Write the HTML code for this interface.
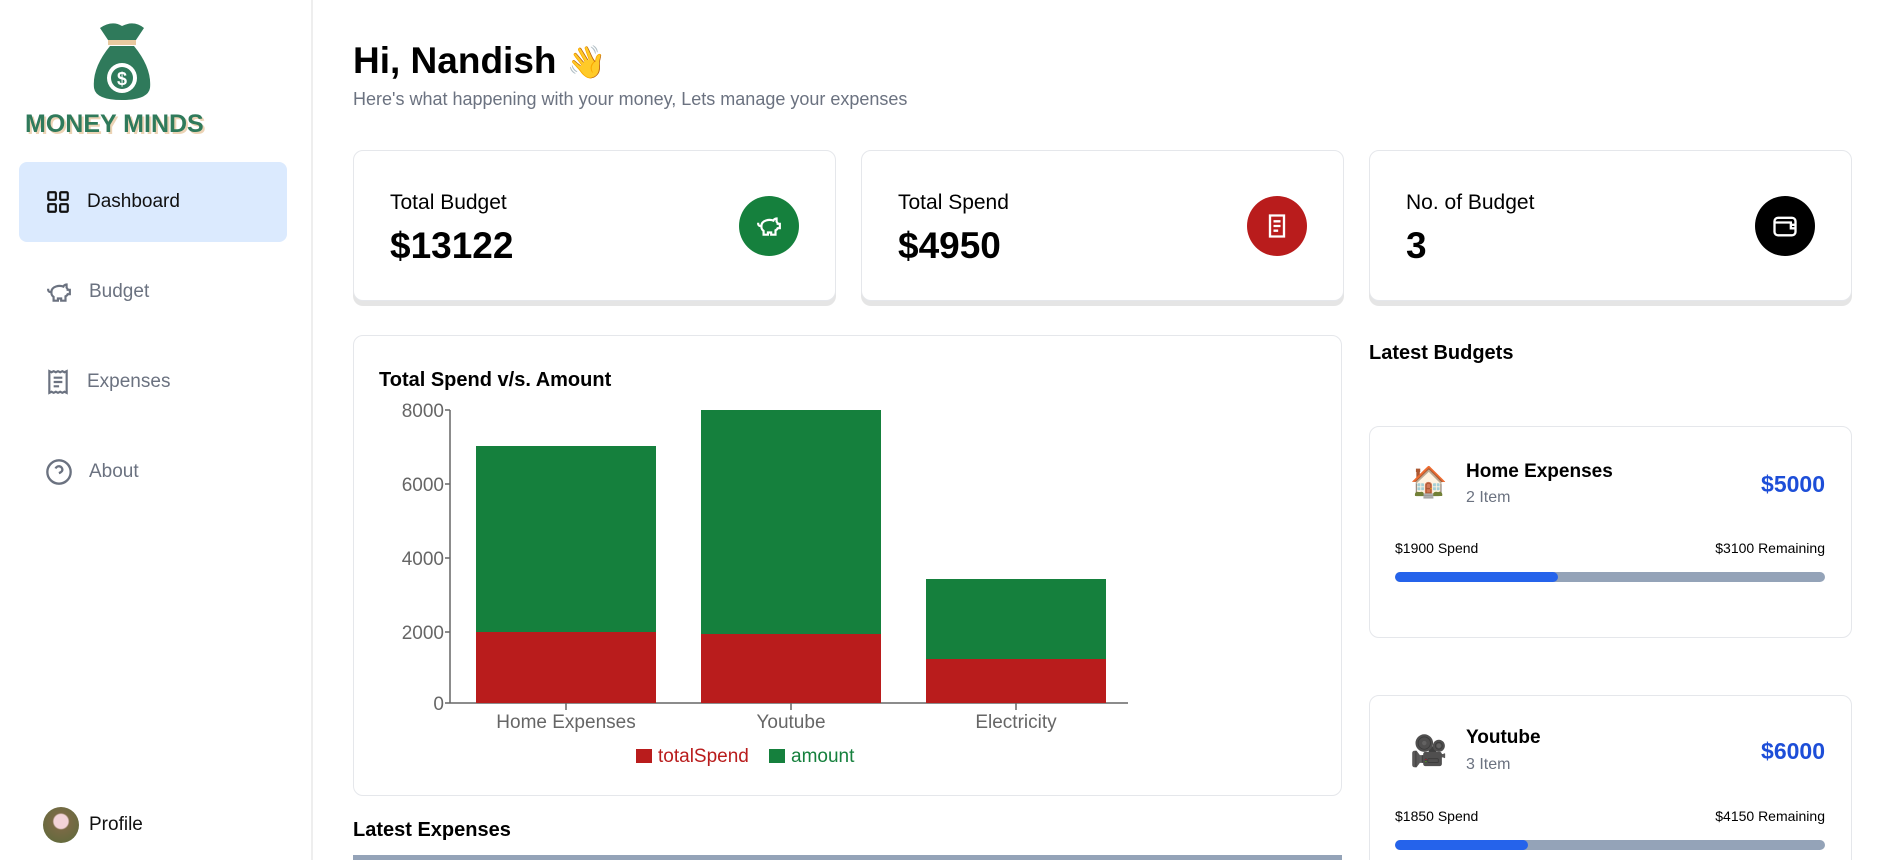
<!DOCTYPE html>
<html style="width:1892px;height:860px;overflow:hidden"><head><meta charset="utf-8"><style>
*{box-sizing:border-box;margin:0;padding:0}
body{width:1892px;height:860px;overflow:hidden;background:#fff;font-family:"Liberation Sans",sans-serif;position:relative;color:#000}
.a{position:absolute}
.side{left:0;top:0;width:313px;height:860px;border-right:2px solid #eee}
.nav{left:19px;width:268px;height:80px;border-radius:8px;display:flex;align-items:center;padding-left:26px;font-size:19px;color:#6b7280}
.nav svg{margin-right:16px}
.card{border:1px solid #e5e7eb;border-radius:10px;background:#fff}
.stat{top:150px;height:151px;width:483px;box-shadow:0 5px 0 #e5e5e5}
.stat .l{position:absolute;left:36px;top:40px;font-size:21px}
.stat .v{position:absolute;left:36px;top:74px;font-size:37px;font-weight:bold}
.stat .ic{position:absolute;right:36px;top:45px;width:60px;height:60px;border-radius:50%;display:flex;align-items:center;justify-content:center}
.bud{left:1369px;width:483px}
.bud .e{position:absolute;left:40px;font-size:30px}
.bud .n{position:absolute;left:96px;font-size:19px;font-weight:bold}
.bud .i{position:absolute;left:96px;font-size:16px;color:#6b7280}
.bud .m{position:absolute;right:26px;font-size:23px;font-weight:bold;color:#1d4ed8}
.bud .s{position:absolute;left:25px;right:26px;font-size:14px;display:flex;justify-content:space-between}
.bud .b{position:absolute;left:25px;right:26px;height:10px;border-radius:5px;background:#94a3b8;overflow:hidden}
.bud .b div{height:100%;background:#2563eb;border-radius:5px}
</style></head><body>
<div class="a side">
  <svg class="a" style="left:90px;top:18px" width="64" height="82" viewBox="0 0 64 82">
    <path d="M10 10 Q22 2 32 8 Q44 2 54 10 L46 22 L18 22 Z" fill="#2f7a5b"/>
    <rect x="18" y="22" width="28" height="5" fill="#e8c9a0"/>
    <path d="M20 28 Q2 50 4 70 Q6 82 32 82 Q58 82 60 70 Q62 50 44 28 Z" fill="#2f7a5b"/>
    <circle cx="32" cy="60" r="15" fill="#fff"/><circle cx="32" cy="60" r="11" fill="#2f7a5b"/>
    <text x="32" y="67" font-size="18" font-weight="bold" fill="#fff" text-anchor="middle" font-family="Liberation Sans">$</text>
  </svg>
  <div class="a" style="left:25px;top:110px;font-size:25px;font-weight:bold;color:#2f7a5b;letter-spacing:0px;text-shadow:2px 2px 0 #ecd3b5">MONEY MINDS</div>
  <div class="a nav" style="top:162px;background:#dbeafe;color:#111">
    <svg width="26" height="26" viewBox="0 0 24 24" fill="none" stroke="#111" stroke-width="2"><rect x="3" y="3" width="7" height="7" rx="1"/><rect x="14" y="3" width="7" height="7" rx="1"/><rect x="3" y="14" width="7" height="7" rx="1"/><rect x="14" y="14" width="7" height="7" rx="1"/></svg>Dashboard</div>
  <div class="a nav" style="top:252px">
    <svg width="28" height="26" viewBox="0 0 24 24" fill="none" stroke="#6b7280" stroke-width="2"><path d="M19 5c-1.5 0-2.8 1.4-3 2-3.5-1.5-11-.3-11 5 0 1.8 0 3 2 4.5V20h4v-2h3v2h4v-4c1-.5 1.7-1 2-2h2v-4h-2c0-1-.5-1.5-1-2V5z"/><path d="M2 9v1c0 1.1.9 2 2 2h1"/></svg>Budget</div>
  <div class="a nav" style="top:342px">
    <svg width="26" height="26" viewBox="0 0 24 24" fill="none" stroke="#6b7280" stroke-width="2"><path d="M4 2v20l2-1 2 1 2-1 2 1 2-1 2 1 2-1 2 1V2l-2 1-2-1-2 1-2-1-2 1-2-1-2 1Z"/><path d="M16 8H8M16 12H8M13 16H8"/></svg>Expenses</div>
  <div class="a nav" style="top:432px">
    <svg width="28" height="28" viewBox="0 0 24 24" fill="none" stroke="#6b7280" stroke-width="2"><circle cx="12" cy="12" r="10"/><path d="M9.1 9a3 3 0 0 1 5.8 1c0 2-3 3-3 3M12 17h.01"/></svg>About</div>
  <div class="a" style="left:43px;top:807px;width:36px;height:36px;border-radius:50%;background:radial-gradient(circle at 50% 40%,#f3d3d8 0 25%,#7a6a45 30%,#5a6b3a 100%)"></div>
  <div class="a" style="left:89px;top:814px;font-size:19px;color:#111">Profile</div>
</div>

<div class="a" style="left:353px;top:40px;font-size:37px;font-weight:bold">Hi, Nandish <span style="font-size:32px">👋</span></div>
<div class="a" style="left:353px;top:89px;font-size:18px;color:#6b7280">Here's what happening with your money, Lets manage your expenses</div>

<div class="a card stat" style="left:353px"><div class="l">Total Budget</div><div class="v">$13122</div>
 <div class="ic" style="background:#15803d"><svg width="28" height="26" viewBox="0 0 24 24" fill="none" stroke="#fff" stroke-width="2"><path d="M19 5c-1.5 0-2.8 1.4-3 2-3.5-1.5-11-.3-11 5 0 1.8 0 3 2 4.5V20h4v-2h3v2h4v-4c1-.5 1.7-1 2-2h2v-4h-2c0-1-.5-1.5-1-2V5z"/><path d="M2 9v1c0 1.1.9 2 2 2h1"/></svg></div></div>
<div class="a card stat" style="left:861px"><div class="l">Total Spend</div><div class="v">$4950</div>
 <div class="ic" style="background:#b91c1c"><svg width="28" height="28" viewBox="0 0 24 24" fill="none" stroke="#fff" stroke-width="2"><path d="M6 3h12v18H6z"/><path d="M15 8H9M15 12H9M13 16H9"/></svg></div></div>
<div class="a card stat" style="left:1369px"><div class="l">No. of Budget</div><div class="v">3</div>
 <div class="ic" style="background:#000"><svg width="28" height="28" viewBox="0 0 24 24" fill="none" stroke="#fff" stroke-width="2"><rect x="3" y="5" width="18" height="15" rx="3"/><path d="M3 9h15M21 11h-4v3h4"/></svg></div></div>

<div class="a card" style="left:353px;top:335px;width:989px;height:461px">
  <div class="a" style="left:25px;top:33px;font-size:20px;font-weight:bold">Total Spend v/s. Amount</div>
</div>
<svg class="a" style="left:353px;top:335px" width="989" height="461" font-family="Liberation Sans">
  <g fill="#666" font-size="19" text-anchor="end">
    <text x="91" y="82">8000</text><text x="91" y="156">6000</text><text x="91" y="230">4000</text><text x="91" y="304">2000</text><text x="91" y="375">0</text>
  </g>
  <g stroke="#666" stroke-width="1.5"><line x1="97" y1="75" x2="97" y2="368"/><line x1="92" y1="75" x2="97" y2="75"/><line x1="92" y1="149" x2="97" y2="149"/><line x1="92" y1="223" x2="97" y2="223"/><line x1="92" y1="297" x2="97" y2="297"/><line x1="92" y1="368" x2="775" y2="368"/>
  <line x1="213" y1="368" x2="213" y2="375"/><line x1="438" y1="368" x2="438" y2="375"/><line x1="663" y1="368" x2="663" y2="375"/></g>
  <rect x="123" y="111" width="180" height="186" fill="#15803d"/><rect x="123" y="297" width="180" height="71" fill="#b91c1c"/>
  <rect x="348" y="75" width="180" height="224" fill="#15803d"/><rect x="348" y="299" width="180" height="69" fill="#b91c1c"/>
  <rect x="573" y="244" width="180" height="80" fill="#15803d"/><rect x="573" y="324" width="180" height="44" fill="#b91c1c"/>
  <g fill="#666" font-size="19" text-anchor="middle"><text x="213" y="393">Home Expenses</text><text x="438" y="393">Youtube</text><text x="663" y="393">Electricity</text></g>
  <rect x="283" y="414" width="16" height="14" fill="#b91c1c"/><text x="305" y="427" font-size="19" fill="#b91c1c">totalSpend</text>
  <rect x="416" y="414" width="16" height="14" fill="#15803d"/><text x="438" y="427" font-size="19" fill="#15803d">amount</text>
</svg>

<div class="a" style="left:353px;top:819px;font-size:20px;font-weight:bold">Latest Expenses</div>
<div class="a" style="left:353px;top:855px;width:989px;height:5px;background:#94a3b8"></div>

<div class="a" style="left:1369px;top:342px;font-size:20px;font-weight:bold">Latest Budgets</div>
<div class="a card bud" style="top:426px;height:212px">
  <div class="e" style="top:38px">🏠</div>
  <div class="n" style="top:34px">Home Expenses</div><div class="i" style="top:62px">2 Item</div>
  <div class="m" style="top:44px">$5000</div>
  <div class="s" style="top:113px"><span>$1900 Spend</span><span>$3100 Remaining</span></div>
  <div class="b" style="top:145px"><div style="width:38%"></div></div>
</div>
<div class="a card bud" style="top:695px;height:175px">
  <div class="e" style="top:38px">🎥</div>
  <div class="n" style="top:31px">Youtube</div><div class="i" style="top:60px">3 Item</div>
  <div class="m" style="top:42px">$6000</div>
  <div class="s" style="top:112px"><span>$1850 Spend</span><span>$4150 Remaining</span></div>
  <div class="b" style="top:144px"><div style="width:31%"></div></div>
</div>
</body></html>
